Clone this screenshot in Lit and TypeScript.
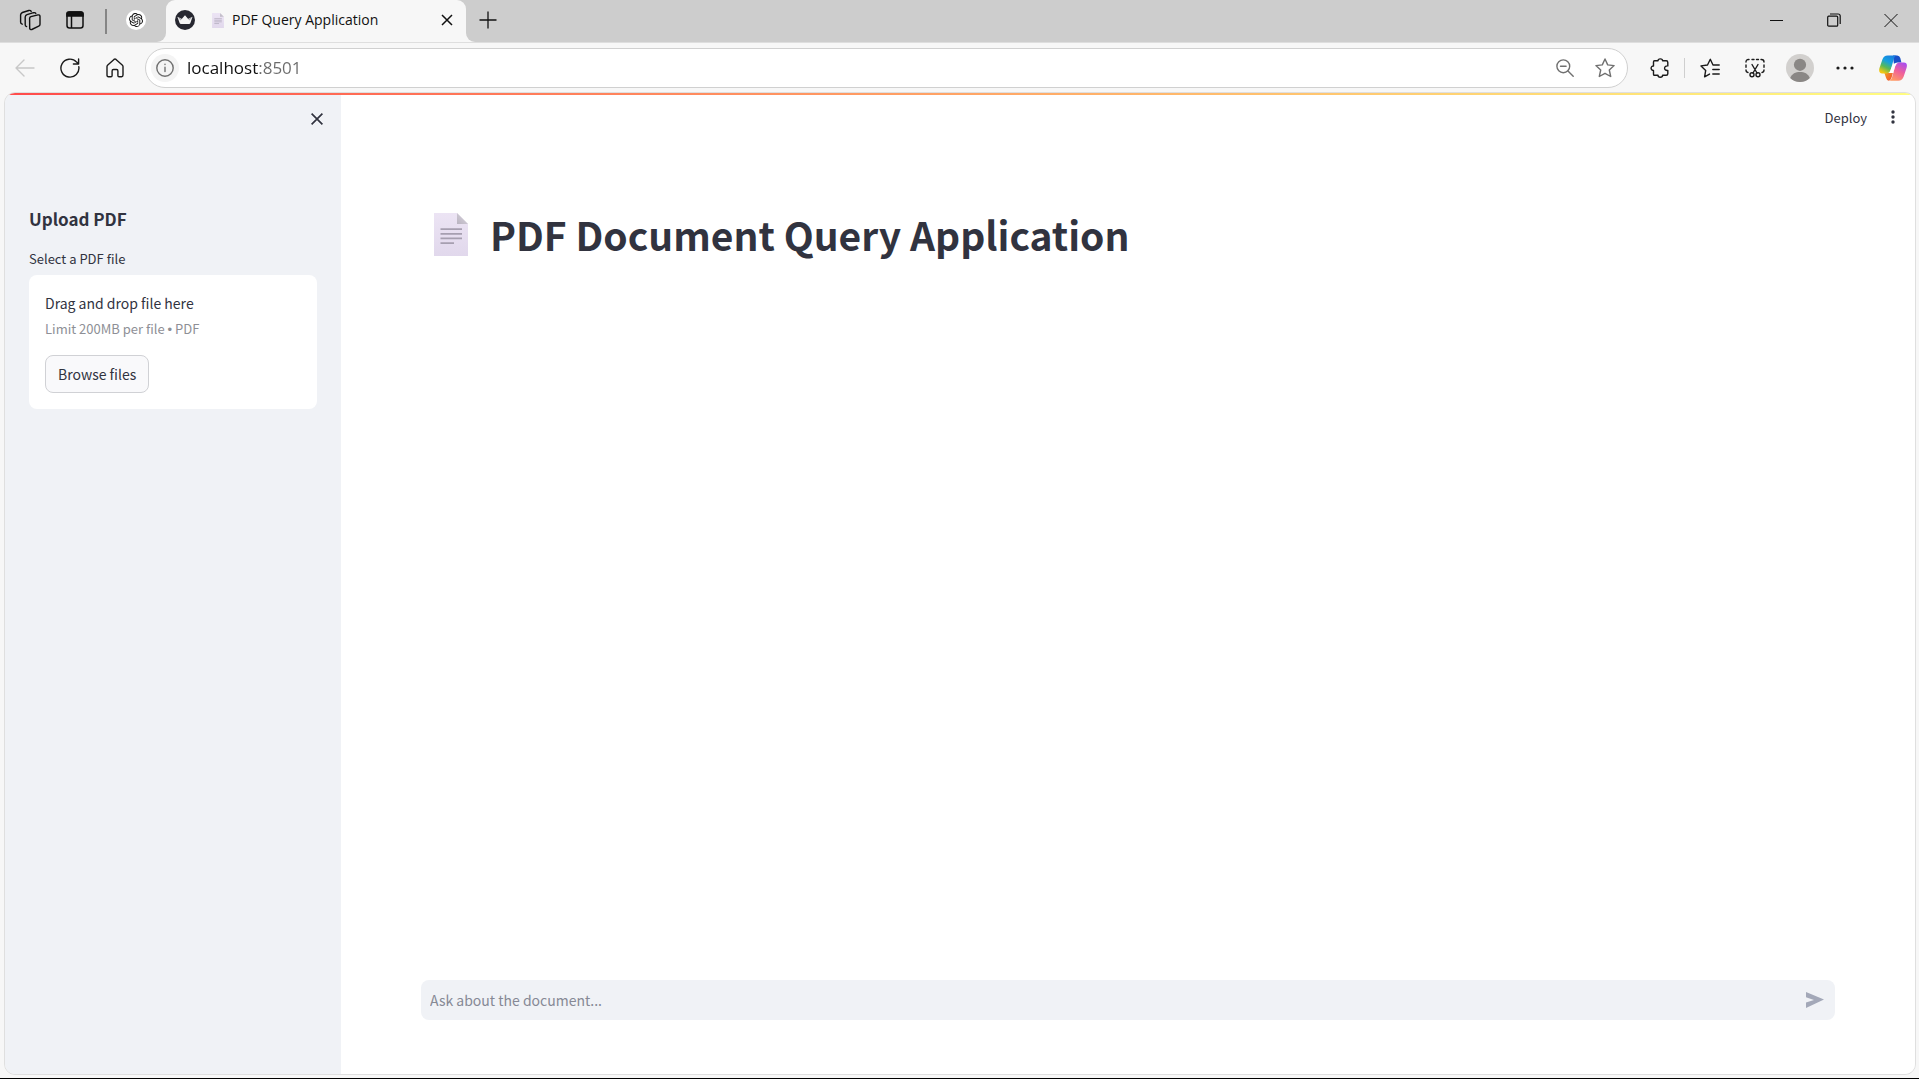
import { LitElement, html, css } from "lit";
import { customElement, state } from "lit/decorators.js";

const documentIcon = html`
  <svg class="doc" viewBox="0 0 34 43" aria-hidden="true">
    <defs>
      <linearGradient id="sheet" x1="0" y1="0" x2="0" y2="1">
        <stop offset="0" stop-color="#ece4f4" />
        <stop offset="1" stop-color="#e1d8ec" />
      </linearGradient>
      <linearGradient id="fold" x1="0" y1="1" x2="1" y2="0">
        <stop offset="0" stop-color="#b9b3c0" />
        <stop offset="1" stop-color="#dcd8e0" />
      </linearGradient>
    </defs>
    <path d="M0 0H23L34 11V43H0Z" fill="url(#sheet)" />
    <path d="M23 0L34 11H23Z" fill="url(#fold)" />
    <path d="M6.5 16.2H28M6.5 20.8H28M6.5 25.3H28M6.5 30.2H20" stroke="#a69fb0" stroke-width="1.7" />
  </svg>
`;

@customElement("browser-tabs")
export class BrowserTabs extends LitElement {
  static styles = css`
    :host {
      display: flex;
      height: 42px;
      font: 14px/20px "Open Sans", "Noto Sans", sans-serif;
      color: #111;
      background: #f7f7f7;
    }
    button {
      display: grid;
      place-items: center;
      padding: 0;
      border: 0;
      background: none;
      color: inherit;
    }
    svg {
      display: block;
      fill: none;
      stroke: currentColor;
    }
    .left,
    .rest {
      display: flex;
      background: #cdcdcd;
    }
    .left {
      padding-left: 7px;
      border-bottom-right-radius: 9px;
    }
    .left button {
      width: 45px;
      height: 40px;
    }
    .divider {
      width: 2px;
      height: 25px;
      margin: 9px 7px 0 8px;
      background: #858585;
    }
    .left .pinned {
      width: 44px;
      margin-right: 8px;
    }
    .slot {
      width: 300px;
      background: linear-gradient(#cdcdcd 20px, #f7f7f7 20px);
    }
    .tab {
      display: flex;
      align-items: center;
      height: 40px;
      padding: 0 9px 0 9px;
      box-sizing: border-box;
      border-radius: 9px 9px 0 0;
      background: #f7f7f7;
    }
    .doc {
      width: 12px;
      height: 15px;
      margin: 0 8px 0 17px;
      stroke: none;
    }
    .doc path[stroke] {
      stroke: #a69fb0;
    }
    .title {
      flex: 1;
      white-space: nowrap;
    }
    .tab button {
      width: 20px;
      height: 20px;
    }
    .rest {
      flex: 1;
      border-bottom-left-radius: 9px;
    }
    .rest button {
      height: 40px;
    }
    .new {
      width: 44px;
    }
    .window {
      display: flex;
      margin-left: auto;
    }
    .window button {
      width: 57px;
    }
  `;

  render() {
    return html`
      <div class="left">
        <button aria-label="Workspaces">
          <svg width="22" height="22" viewBox="0 0 22 22" stroke-width="1.4" stroke-linejoin="round" stroke-linecap="round">
            <path d="M10.6 9.2Q10.7 8 11.9 7.6L19 5.9Q20.9 5.7 21 7.4V15.4Q20.9 16.7 19.7 17.2L12.8 20.5Q11.2 21 10.7 19.5Z" />
            <path d="M7.6 17.6Q6.1 17.1 6.2 15.6V8Q6.4 6.2 8 5.6L14.5 3.7Q16.2 3.3 16.8 4.4" />
            <path d="M3.2 15.2Q1.5 14.6 1.6 13V5.8Q1.8 4.2 3.4 3.5L9.8 1.5Q11.5 1.1 12.2 2.4" />
          </svg>
        </button>
        <button aria-label="Tab actions">
          <svg width="18" height="18" viewBox="0 0 18 18" stroke-width="1.5">
            <rect x="1" y="1" width="16" height="16" rx="2.5" />
            <path d="M1 2Q1 1 3 1H15Q17 1 17 3V5H1Z" fill="currentColor" />
            <path d="M5.5 5V17" />
          </svg>
        </button>
        <span class="divider"></span>
        <button class="pinned" aria-label="ChatGPT">
          <svg width="20" height="20" viewBox="0 0 20 20">
            <circle cx="10" cy="10" r="10" fill="#fff" stroke="none" />
            <path
              transform="translate(3 3) scale(.583)"
              fill="currentColor"
              stroke="none"
              d="M22.2819 9.8211a5.9847 5.9847 0 0 0-.5157-4.9108 6.0462 6.0462 0 0 0-6.5098-2.9A6.0651 6.0651 0 0 0 4.9807 4.1818a5.9847 5.9847 0 0 0-3.9977 2.9 6.0462 6.0462 0 0 0 .7427 7.0966 5.98 5.98 0 0 0 .511 4.9107 6.051 6.051 0 0 0 6.5146 2.9001A5.9847 5.9847 0 0 0 13.2599 24a6.0557 6.0557 0 0 0 5.7718-4.2058 5.9894 5.9894 0 0 0 3.9977-2.9001 6.0557 6.0557 0 0 0-.7475-7.0729zm-9.022 12.6081a4.4755 4.4755 0 0 1-2.8764-1.0408l.1419-.0804 4.7783-2.7582a.7948.7948 0 0 0 .3927-.6813v-6.7369l2.02 1.1686a.071.071 0 0 1 .038.052v5.5826a4.504 4.504 0 0 1-4.4945 4.4944zm-9.6607-4.1254a4.4708 4.4708 0 0 1-.5346-3.0137l.142.0852 4.783 2.7582a.7712.7712 0 0 0 .7806 0l5.8428-3.3685v2.3324a.0804.0804 0 0 1-.0332.0615L9.74 19.9502a4.4992 4.4992 0 0 1-6.1408-1.6464zM2.3408 7.8956a4.485 4.485 0 0 1 2.3655-1.9728V11.6a.7664.7664 0 0 0 .3879.6765l5.8144 3.3543-2.0201 1.1685a.0757.0757 0 0 1-.071 0l-4.8303-2.7865A4.504 4.504 0 0 1 2.3408 7.872zm16.5963 3.8558L13.1038 8.364 15.1192 7.2a.0757.0757 0 0 1 .071 0l4.8303 2.7913a4.4944 4.4944 0 0 1-.6765 8.1042v-5.6772a.79.79 0 0 0-.407-.667zm2.0107-3.0231l-.142-.0852-4.7735-2.7818a.7759.7759 0 0 0-.7854 0L9.409 9.2297V6.8974a.0662.0662 0 0 1 .0284-.0615l4.8303-2.7866a4.4992 4.4992 0 0 1 6.6802 4.66zM8.3065 12.863l-2.02-1.1638a.0804.0804 0 0 1-.038-.0567V6.0742a4.4992 4.4992 0 0 1 7.3757-3.4537l-.142.0805L8.704 5.459a.7948.7948 0 0 0-.3927.6813zm1.0976-2.3654l2.602-1.4998 2.6069 1.4998v2.9994l-2.5974 1.4997-2.6067-1.4997Z"
            />
          </svg>
        </button>
      </div>
      <div class="slot">
        <div class="tab">
          <svg width="20" height="20" viewBox="0 0 20 20" stroke="none" aria-hidden="true">
            <circle cx="10" cy="10" r="10" fill="#262730" stroke="none" />
            <path d="M2.4 6.8L6.7 9.1L10 5.2L13.2 9.1L17.5 6.8L15.3 13.3Q15 14.1 14 14.1H6Q5 14.1 4.7 13.3Z" fill="#f4f4f4" stroke="none" />
            <path d="M2.4 6.8L6.7 9.1L5.6 10.4ZM17.5 6.8L13.2 9.1L14.4 10.4Z" fill="#a9a9ae" stroke="none" />
          </svg>
          ${documentIcon}
          <span class="title">PDF Query Application</span>
          <button aria-label="Close tab">
            <svg width="12" height="12" viewBox="0 0 12 12" stroke-width="1.5"><path d="M1 1L11 11M11 1L1 11" /></svg>
          </button>
        </div>
      </div>
      <div class="rest">
        <button class="new" aria-label="New tab">
          <svg width="18" height="18" viewBox="0 0 18 18" stroke-width="1.3"><path d="M9 .5V17.5M.5 9H17.5" /></svg>
        </button>
        <div class="window">
          <button aria-label="Minimize">
            <svg width="14" height="14" viewBox="0 0 14 14"><path d="M0 7.5H13" /></svg>
          </button>
          <button aria-label="Restore">
            <svg width="14" height="14" viewBox="0 0 14 14" stroke-width="1.2">
              <rect x=".7" y="3.2" width="10" height="10" rx="1" />
              <path d="M3 1H11Q13.2 1 13.2 3V11" />
            </svg>
          </button>
          <button aria-label="Close window">
            <svg width="14" height="14" viewBox="0 0 14 14"><path d="M.5 1L13.5 14M13.5 1L.5 14" /></svg>
          </button>
        </div>
      </div>
    `;
  }
}

@customElement("browser-toolbar")
export class BrowserToolbar extends LitElement {
  static styles = css`
    :host {
      display: flex;
      align-items: center;
      height: 50px;
      padding: 1px 4px 0 2px;
      box-sizing: border-box;
      border-top: 1px solid #dedede;
      background: #f7f7f7;
      color: #1b1b1b;
    }
    button {
      display: grid;
      place-items: center;
      width: 45px;
      height: 38px;
      padding: 0;
      border: 0;
      background: none;
      color: inherit;
    }
    svg {
      display: block;
      fill: none;
      stroke: currentColor;
      stroke-width: 1.4;
      stroke-linecap: round;
      stroke-linejoin: round;
    }
    .filled {
      stroke: none;
    }
    .back {
      color: #c8c8c8;
    }
    .address {
      flex: 1;
      display: flex;
      align-items: center;
      height: 40px;
      margin: 0 9px 0 8px;
      padding: 0 2px 0 5px;
      box-sizing: border-box;
      border: 1px solid #d0d0d0;
      border-radius: 20px;
      background: #fff;
      color: #707070;
    }
    .address button {
      width: 40px;
    }
    .address .info {
      width: 28px;
      height: 28px;
      margin-right: 8px;
      border-radius: 50%;
      background: #f4f4f4;
    }
    input {
      flex: 1;
      min-width: 0;
      padding: 0;
      border: 0;
      outline: 0;
      font: 17px/24px "Open Sans", "Noto Sans", sans-serif;
      color: transparent;
      background: linear-gradient(90deg, #111 71px, #6b6b6b 71px);
      -webkit-background-clip: text;
      background-clip: text;
    }
    .divider {
      width: 1px;
      height: 20px;
      margin: 0 2px;
      background: #cfcfcf;
    }
    .copilot {
      margin-left: 3px;
    }
  `;

  render() {
    return html`
      <button class="back" aria-label="Back">
        <svg width="20" height="18" viewBox="0 0 20 18"><path d="M19 9H1M9 1L1 9L9 17" /></svg>
      </button>
      <button aria-label="Refresh">
        <svg width="20" height="20" viewBox="0 0 20 20"><path d="M18.8 8.6A9 9 0 1 1 16.6 4.1L18.3 5.8M18.6 .9V6H13.4" /></svg>
      </button>
      <button aria-label="Home">
        <svg width="18" height="20" viewBox="0 0 18 20">
          <path d="M1 8.6Q1 7.7 1.8 7L8 1.4Q9 .6 10 1.4L16.2 7Q17 7.7 17 8.6V17Q17 18.7 15.6 18.7H13Q11.9 18.7 11.9 17.5V13Q11.9 11.5 10.6 11.5H7.4Q6.1 11.5 6.1 13V17.5Q6.1 18.7 5 18.7H2.4Q1 18.7 1 17Z" />
        </svg>
      </button>
      <div class="address">
        <button class="info" aria-label="View site information">
          <svg width="18" height="18" viewBox="0 0 18 18"><circle cx="9" cy="9" r="8.2" /><path d="M9 8.2V12.6M9 5.3V5.5" /></svg>
        </button>
        <input type="text" aria-label="Address" value="localhost:8501" spellcheck="false" />
        <button aria-label="Zoom">
          <svg width="18" height="18" viewBox="0 0 18 18"><circle cx="7.3" cy="7.3" r="6.4" /><path d="M12 12L17.2 17.2M4.5 7.3H10.1" /></svg>
        </button>
        <button aria-label="Add to favorites">
          <svg width="20" height="20" viewBox="0 0 20 20">
            <path d="M10 1L12.7 6.9L19.1 7.6L14.3 12L15.7 18.5L10 15.3L4.3 18.5L5.7 12L.9 7.6L7.3 6.9Z" />
          </svg>
        </button>
      </div>
      <button aria-label="Extensions">
        <svg width="20" height="20" viewBox="0 0 20 20">
          <path d="M4.5 2.8H8C8 .2 12.6 .2 12.6 2.8H16.2Q17.8 2.8 17.8 4.4V7.9C13.5 7.4 13.5 12.9 17.8 12.4V15.8Q17.8 17.3 16.2 17.3H12.6C12.6 19.9 8 19.9 8 17.3H4.5Q3.5 17.3 3.5 16V12.4C.3 12.6 .3 7.8 3.5 8V4Q3.5 2.8 4.5 2.8Z" />
        </svg>
      </button>
      <span class="divider"></span>
      <button aria-label="Favorites">
        <svg width="20" height="20" viewBox="0 0 20 20">
          <path d="M13 7L10.3 1.3L7.5 7L1 7.9L5.7 12.4L4.6 18.8L9.5 16.1M13 7H19.2M12.8 11.5H19.2M12.8 16H19.2" />
        </svg>
      </button>
      <button aria-label="Screenshot">
        <svg width="20" height="20" viewBox="0 0 20 20">
          <path d="M1 4Q1 1.5 3.5 1.5H4M7 1.5H9M11.5 1.5H13.5M16 1.5H16.5Q19 1.5 19 4M19 7V9.2M1 7V9.2M1 12Q1 14.2 3 14.5M19 12Q19 14.2 17 14.5M7 6.5L12 15M13 6.5L8 15" />
          <circle cx="7" cy="16.7" r="2" />
          <circle cx="13" cy="16.7" r="2" />
        </svg>
      </button>
      <button aria-label="Profile">
        <svg class="filled" width="28" height="28" viewBox="0 0 28 28">
          <circle cx="14" cy="14" r="14" fill="#d2d0ce" />
          <circle cx="14" cy="10.8" r="6.1" fill="#8a8785" />
          <path d="M4.2 24C6 19.6 9.5 18 14 18S22 19.6 23.8 24A14 14 0 0 1 4.2 24Z" fill="#8a8785" />
        </svg>
      </button>
      <button aria-label="Settings and more">
        <svg class="filled" width="18" height="4" viewBox="0 0 18 4">
          <g fill="#1b1b1b"><circle cx="2" cy="2" r="1.6" /><circle cx="9" cy="2" r="1.6" /><circle cx="16" cy="2" r="1.6" /></g>
        </svg>
      </button>
      <button class="copilot" aria-label="Copilot">
        <svg class="filled" width="28" height="26" viewBox="0 0 28 26">
          <defs>
            <linearGradient id="cool" x1=".7" y1="0" x2=".2" y2="1">
              <stop offset="0" stop-color="#1a7fe0" /><stop offset=".35" stop-color="#15a0e0" />
              <stop offset=".65" stop-color="#58b957" /><stop offset=".95" stop-color="#f4c713" />
            </linearGradient>
            <linearGradient id="warm" x1=".8" y1="0" x2=".3" y2="1">
              <stop offset="0" stop-color="#a84df0" /><stop offset=".5" stop-color="#f0609a" /><stop offset="1" stop-color="#ff9a63" />
            </linearGradient>
            <linearGradient id="ember" x1="0" y1="0" x2="1" y2="1">
              <stop offset="0" stop-color="#f6b21a" /><stop offset="1" stop-color="#ef4438" />
            </linearGradient>
          </defs>
          <path d="M14 .5H18.2Q20.6 .5 21.3 3L22.4 7.6H18.5Q15.8 7.6 15 10Z" fill="#1950c8" />
          <path d="M5.4 18H13L15.5 12L12.6 22.5Q11.6 25.7 9.7 25.7Q7.8 25.7 7.1 23Z" fill="url(#ember)" />
          <path d="M8.6 .5H17.8Q15.7 .6 14.8 3.9L12 13.8Q10.8 18.5 7.2 18.5H3.2Q-.8 18.5 .4 13.2L3.4 4.4Q4.8 .5 8.6 .5Z" fill="url(#cool)" />
          <path d="M19.3 25.7H10.2Q12.2 25.5 13.1 22.2L15.9 12.1Q17.1 7.4 20.8 7.4H24.8Q28.9 7.4 27.6 12.8L24.6 21.7Q23.1 25.7 19.3 25.7Z" fill="url(#warm)" />
          <path d="M14.6 8.6H17.6Q16.6 9.6 15.9 12.1L14.2 18.1H10.4Q11.4 16.2 12 13.8Z" fill="#fff" />
        </svg>
      </button>
    `;
  }
}

@customElement("upload-sidebar")
export class UploadSidebar extends LitElement {
  static styles = css`
    :host {
      display: flex;
      flex-direction: column;
      width: 336px;
      padding: 14px 24px;
      box-sizing: border-box;
      background: #f0f2f6;
    }
    .close {
      display: grid;
      place-items: center;
      align-self: flex-end;
      width: 20px;
      height: 20px;
      margin-right: -10px;
      padding: 0;
      border: 0;
      background: none;
    }
    h2 {
      margin: 78px 0 0;
      font-size: 17px;
      line-height: 24px;
      font-weight: 700;
    }
    label {
      margin-top: 18px;
      font-size: 13px;
      line-height: 20px;
    }
    .drop {
      margin-top: 6px;
      padding: 15px 16px 16px;
      border-radius: 8px;
      background: #fff;
    }
    .drop p {
      margin: 0;
      font-size: 14px;
      line-height: 26px;
    }
    .drop .limit {
      font-size: 13px;
      color: #8e8f96;
    }
    .bullet {
      font-family: "Liberation Sans", sans-serif;
    }
    .browse {
      height: 38px;
      margin-top: 12px;
      padding: 0 12px;
      border: 1px solid #d0d1d5;
      border-radius: 8px;
      background: #f9f9fb;
      color: inherit;
      font: inherit;
      font-size: 14px;
    }
  `;

  private browse() {
    (this.renderRoot.querySelector("#pdf") as HTMLInputElement).click();
  }

  render() {
    return html`
      <button class="close" aria-label="Close sidebar">
        <svg width="12" height="12" viewBox="0 0 12 12" stroke="#31333f" stroke-width="1.7"><path d="M.6 .6L11.4 11.4M11.4 .6L.6 11.4" /></svg>
      </button>
      <h2>Upload PDF</h2>
      <label for="pdf">Select a PDF file</label>
      <div class="drop">
        <input id="pdf" type="file" accept=".pdf" hidden />
        <p>Drag and drop file here</p>
        <p class="limit">Limit 200MB per file <span class="bullet">•</span> PDF</p>
        <button class="browse" @click=${this.browse}>Browse files</button>
      </div>
    `;
  }
}

@customElement("query-page")
export class QueryPage extends LitElement {
  static styles = css`
    :host {
      flex: 1;
      display: flex;
      flex-direction: column;
      min-width: 0;
      background: #fff;
    }
    header {
      display: flex;
      justify-content: flex-end;
      align-items: center;
      gap: 16px;
      padding: 9px 12px 0 0;
    }
    button {
      display: grid;
      place-items: center;
      height: 26px;
      padding: 0;
      border: 0;
      background: none;
      color: inherit;
      font: inherit;
      font-size: 13px;
    }
    .menu {
      width: 20px;
    }
    main {
      flex: 1;
      padding: 76px 80px 0;
    }
    h1 {
      display: flex;
      align-items: center;
      gap: 22px;
      margin: 0;
      padding-left: 13px;
      font-size: 39px;
      line-height: 56px;
      font-weight: 700;
    }
    .doc {
      width: 34px;
      height: 43px;
    }
    form {
      display: flex;
      align-items: center;
      height: 40px;
      margin: 0 80px 54px;
      padding: 0 10px 0 9px;
      border-radius: 8px;
      background: #f0f2f6;
    }
    input {
      flex: 1;
      min-width: 0;
      padding: 0;
      border: 0;
      outline: 0;
      background: none;
      color: inherit;
      font: inherit;
      font-size: 14px;
    }
    input::placeholder {
      color: #868995;
      opacity: 1;
    }
  `;

  @state() private question = "";

  render() {
    return html`
      <header>
        <button>Deploy</button>
        <button class="menu" aria-label="Main menu">
          <svg width="4" height="14" viewBox="0 0 4 14" fill="#31333f">
            <circle cx="2" cy="2" r="1.7" /><circle cx="2" cy="7" r="1.7" /><circle cx="2" cy="12" r="1.7" />
          </svg>
        </button>
      </header>
      <main>
        <h1>${documentIcon}<span>PDF Document Query Application</span></h1>
      </main>
      <form @submit=${(e: Event) => e.preventDefault()}>
        <input
          type="text"
          aria-label="Ask about the document"
          placeholder="Ask about the document..."
          .value=${this.question}
          @input=${(e: Event) => (this.question = (e.target as HTMLInputElement).value)}
        />
        <button aria-label="Send">
          <svg width="20" height="16" viewBox="0 0 20 16"><path d="M1 0L19 7.5L1 16V10.5L9 8L1 5.3Z" fill="#a3a8b8" /></svg>
        </button>
      </form>
    `;
  }
}

@customElement("app-root")
export class AppRoot extends LitElement {
  static styles = css`
    :host {
      display: flex;
      flex-direction: column;
      min-height: 100vh;
      box-sizing: border-box;
      border-bottom: 1px solid #000;
      background: #f7f7f7;
      color: #31333f;
      font-family: "Noto Sans CJK SC", sans-serif;
    }
    .page {
      flex: 1;
      display: flex;
      flex-direction: column;
      margin: 0 3px 3px 4px;
      overflow: hidden;
      border: 1px solid #dfdfdf;
      border-radius: 11px;
    }
    .strip {
      height: 2px;
      background: linear-gradient(90deg, #ff4b4b, #fffd80);
    }
    .body {
      flex: 1;
      display: flex;
    }
  `;

  render() {
    return html`
      <browser-tabs></browser-tabs>
      <browser-toolbar></browser-toolbar>
      <div class="page">
        <div class="strip"></div>
        <div class="body">
          <upload-sidebar></upload-sidebar>
          <query-page></query-page>
        </div>
      </div>
    `;
  }
}
